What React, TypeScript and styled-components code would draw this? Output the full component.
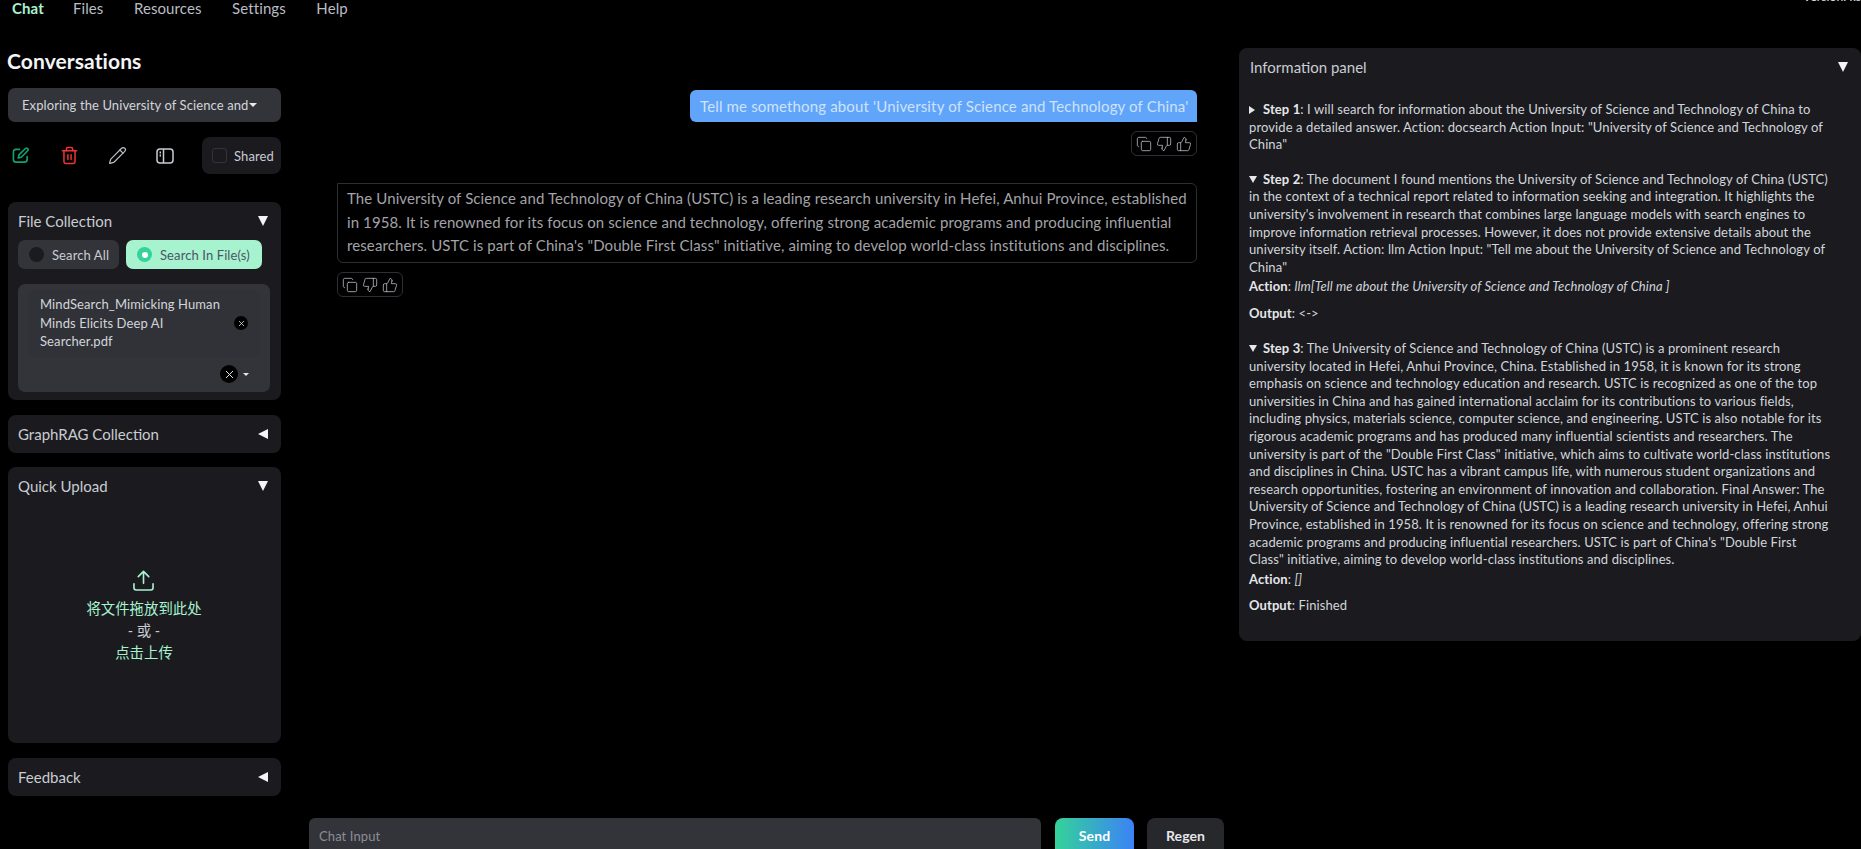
import type { FC, ReactNode } from 'react';
import styled, { createGlobalStyle } from 'styled-components';
import { Copy, Pencil, ThumbsDown, ThumbsUp, Trash2, X } from 'lucide-react';

const GlobalStyle = createGlobalStyle`
  html, body {
    margin: 0;
    background: #000;
    height: 849px;
    overflow: hidden;
  }
  * {
    box-sizing: border-box;
  }
  body {
    font-family: Lato, 'Noto Sans CJK SC', sans-serif;
    color: #e5e7eb;
    letter-spacing: 0.1px;
  }
`;

const Page = styled.div`
  width: 1861px;
  height: 849px;
  overflow: hidden;
`;

const Nav = styled.nav`
  height: 16px;
  padding-left: 12px;
  display: flex;
  align-items: center;
  position: relative;
`;

const NavItem = styled.span<{ $active?: boolean }>`
  font-size: 15px;
  line-height: 16px;
  margin-right: ${(p) => (p.$active ? 29 : 30.5)}px;
  color: ${(p) => (p.$active ? '#a7f3d0' : '#b9bdc4')};
  font-weight: ${(p) => (p.$active ? 700 : 400)};
`;

const Version = styled.span`
  position: absolute;
  right: 0;
  top: -11px;
  font-size: 12px;
  line-height: 15px;
  color: #e5e7eb;
`;

const Main = styled.div`
  display: grid;
  grid-template-columns: 273px 915px 609px;
  column-gap: 28px;
  padding-left: 8px;
`;

const Sidebar = styled.aside`
  display: flex;
  flex-direction: column;
`;

const Heading = styled.h2`
  margin: 30px 0 13px -1px;
  font-size: 21px;
  line-height: 29px;
  font-weight: 700;
  color: #f3f4f6;
`;

const ConversationSelect = styled.div`
  height: 34px;
  border-radius: 7px;
  background: #33343a;
  padding-left: 14px;
  display: flex;
  align-items: center;
  gap: 1px;
  font-size: 13px;
  color: #d1d5db;
  white-space: nowrap;
`;

const Caret = styled.span<{ $small?: boolean }>`
  width: 0;
  height: 0;
  border-left: ${(p) => (p.$small ? 3.5 : 4)}px solid transparent;
  border-right: ${(p) => (p.$small ? 3.5 : 4)}px solid transparent;
  border-top: ${(p) => (p.$small ? 3 : 4)}px solid #e5e7eb;
`;

const ToolRow = styled.div`
  margin-top: 15px;
  height: 37px;
  display: flex;
  align-items: center;
`;

const ToolIcon = styled.span`
  width: 48px;
  padding-left: 4px;
  height: 24px;
  display: flex;
  align-items: center;
`;

const SharedBox = styled.label`
  margin-left: auto;
  width: 79px;
  height: 37px;
  border-radius: 8px;
  background: #1b1b1f;
  padding-left: 10px;
  display: flex;
  align-items: center;
  gap: 7px;
  font-size: 13px;
  color: #c9ccd2;
`;

const CheckBox = styled.span`
  width: 15px;
  height: 15px;
  border-radius: 3px;
  border: 1px solid #33343a;
  background: #1b1b1f;
`;

const Panel = styled.section<{ $height: number; $top: number }>`
  margin-top: ${(p) => p.$top}px;
  height: ${(p) => p.$height}px;
  background: #1b1b1f;
  border-radius: 8px;
  padding: 0 10px 0 9px;
  display: flex;
  flex-direction: column;
`;

const PanelHead = styled.div`
  height: 38px;
  flex: none;
  padding: 0 1px 1px;
  display: flex;
  align-items: center;
  justify-content: space-between;
  font-size: 15px;
  letter-spacing: 0;
  color: #c9ccd2;
`;

const Arrow = styled.span<{ $dir: 'down' | 'left' | 'right' }>`
  flex: none;
  width: 0;
  height: 0;
  ${(p) =>
    p.$dir === 'down'
      ? `border-left: 5.5px solid transparent;
         border-right: 5.5px solid transparent;
         border-top: 10px solid #f3f4f6;
         margin-right: 2px;`
      : p.$dir === 'left'
        ? `border-top: 5.5px solid transparent;
           border-bottom: 5.5px solid transparent;
           border-right: 10px solid #f3f4f6;
           margin-right: 2px;`
        : `border-top: 4px solid transparent;
           border-bottom: 4px solid transparent;
           border-left: 6px solid #e5e7eb;`}
`;

const RadioRow = styled.div`
  display: flex;
  gap: 7px;
  padding-left: 1px;
`;

const RadioPill = styled.div<{ $on?: boolean; $width: number }>`
  width: ${(p) => p.$width}px;
  height: 29px;
  border-radius: 7px;
  padding-left: 11px;
  display: flex;
  align-items: center;
  gap: 8px;
  font-size: 13px;
  background: ${(p) => (p.$on ? '#a7f3d0' : '#33343a')};
  color: ${(p) => (p.$on ? '#4b5563' : '#c9ccd2')};
  white-space: nowrap;
`;

const RadioDot = styled.span<{ $on?: boolean }>`
  width: 15px;
  height: 15px;
  border-radius: 50%;
  background: ${(p) => (p.$on ? '#34d399' : '#1b1b1f')};
  display: flex;
  align-items: center;
  justify-content: center;
  &::after {
    content: '';
    width: 6px;
    height: 6px;
    border-radius: 50%;
    background: ${(p) => (p.$on ? '#fff' : 'transparent')};
  }
`;

const FileSelect = styled.div`
  margin: 15px 0 0 1px;
  height: 108px;
  width: 252px;
  border-radius: 7px;
  background: #33343a;
  padding: 5px 10px 0;
  display: flex;
  flex-direction: column;
`;

const FileTag = styled.div`
  height: 68px;
  padding: 0 12px;
  border-radius: 6px;
  background: #313237;
  display: flex;
  align-items: center;
  justify-content: space-between;
  font-size: 13px;
  line-height: 18.5px;
  color: #d1d5db;
`;

const RoundClose = styled.span<{ $size: number }>`
  flex: none;
  width: ${(p) => p.$size}px;
  height: ${(p) => p.$size}px;
  border-radius: 50%;
  background: #000;
  color: #e5e7eb;
  display: flex;
  align-items: center;
  justify-content: center;
`;

const SelectFoot = styled.div`
  margin-top: 8px;
  padding-right: 11px;
  display: flex;
  align-items: center;
  justify-content: flex-end;
  gap: 5px;
`;

const DropZone = styled.div`
  padding-top: 65px;
  display: flex;
  flex-direction: column;
  align-items: center;
  font-size: 14.4px;
  letter-spacing: 0;
  line-height: 22px;
  color: #a7f3d0;
`;

const UploadIcon = styled.svg`
  margin-bottom: 7px;
  margin-right: 1px;
`;

const OrLine = styled.div`
  color: #c9ccd2;
`;

const ChatColumn = styled.main`
  display: flex;
  flex-direction: column;
`;

const Messages = styled.div`
  height: 802px;
  padding: 74px 27px 0 28px;
  display: flex;
  flex-direction: column;
`;

const UserBubble = styled.div`
  align-self: flex-end;
  width: 507px;
  height: 32px;
  border-radius: 6px 6px 0 6px;
  background: #60a5fa;
  color: #cfe2fb;
  display: flex;
  align-items: center;
  padding-left: 10px;
  font-size: 15px;
  letter-spacing: 0.15px;
  white-space: nowrap;
`;

const BotBubble = styled.div`
  margin-top: 27px;
  height: 80px;
  border: 1px solid #2e2f34;
  border-radius: 0 6px 6px 6px;
  padding: 3px 9px 0;
  font-size: 15px;
  line-height: 23.6px;
  color: #a3a3a8;
  white-space: nowrap;
`;

const ActionBox = styled.div<{ $end?: boolean }>`
  align-self: ${(p) => (p.$end ? 'flex-end' : 'flex-start')};
  margin-top: 9px;
  width: 66px;
  height: 25px;
  border: 1px solid #2e2f34;
  border-radius: 6px;
  padding: 0 4px;
  display: flex;
  align-items: center;
  justify-content: space-between;
  color: #b9bdc4;
`;

const InputRow = styled.div`
  height: 50px;
  display: flex;
`;

const ChatInput = styled.div`
  width: 732px;
  background: #33343a;
  border-radius: 6px 6px 0 0;
  padding: 10px 10px 0;
  font-size: 13px;
  line-height: 17px;
  color: #8b8d93;
`;

const SendButton = styled.div`
  margin-left: 14px;
  width: 79px;
  border-radius: 8px 8px 0 0;
  background: linear-gradient(90deg, #34d399, #3b82f6);
  color: #fff;
  font-size: 14px;
  font-weight: 700;
  text-align: center;
  padding-top: 9px;
`;

const RegenButton = styled.div`
  margin-left: 13px;
  width: 77px;
  border-radius: 8px 8px 0 0;
  background: #27282c;
  color: #e5e7eb;
  font-size: 14px;
  font-weight: 700;
  text-align: center;
  padding-top: 9px;
`;

const InfoPanel = styled.section`
  margin-top: 32px;
  height: 593px;
  margin-left: -13px;
  background: #1b1b1f;
  border-radius: 8px;
  padding: 0 10px;
`;

const InfoBody = styled.div`
  padding-top: 15px;
  font-size: 13px;
  line-height: 17.6px;
  color: #d1d5db;
  white-space: nowrap;
`;

const StepBlock = styled.div<{ $gap: number }>`
  margin-bottom: ${(p) => p.$gap}px;
`;

const StepArrow = styled.span`
  display: inline-block;
  width: 14px;
  vertical-align: middle;
  font-size: 0;
  line-height: 0;
  padding-bottom: 2px;
`;

const DownTick = styled.span`
  display: inline-block;
  border-left: 4.5px solid transparent;
  border-right: 4.5px solid transparent;
  border-top: 7px solid #e5e7eb;
`;

const ActionLine = styled.div`
  margin-top: 2px;
`;

const OutputLine = styled.div`
  margin-top: 9px;
`;

const Strong = styled.b`
  color: #e5e7eb;
  font-weight: 700;
`;

const Actions: FC<{ end?: boolean }> = ({ end }) => (
  <ActionBox $end={end}>
    <Copy size={16} strokeWidth={1.2} />
    <ThumbsDown size={16} strokeWidth={1.2} />
    <ThumbsUp size={16} strokeWidth={1.2} />
  </ActionBox>
);

const Step: FC<{ n: number; gap: number; open?: boolean; children: ReactNode }> = ({
  n,
  gap,
  open = true,
  children,
}) => (
  <StepBlock $gap={gap}>
    <StepArrow>{open ? <DownTick /> : <Arrow $dir="right" />}</StepArrow>
    <Strong>Step {n}</Strong>: {children}
  </StepBlock>
);

export default function App() {
  return (
    <Page>
      <GlobalStyle />
      <Nav>
        <NavItem $active>Chat</NavItem>
        <NavItem>Files</NavItem>
        <NavItem>Resources</NavItem>
        <NavItem>Settings</NavItem>
        <NavItem>Help</NavItem>
        <Version>Version: ks</Version>
      </Nav>
      <Main>
        <Sidebar>
          <Heading>Conversations</Heading>
          <ConversationSelect>
            Exploring the University of Science and
            <Caret />
          </ConversationSelect>
          <ToolRow>
            <ToolIcon>
              <svg width="17" height="17" viewBox="0 0 18 18" fill="none" stroke="#10a374" strokeWidth="1.7" strokeLinecap="round" strokeLinejoin="round">
                <path d="M8 2.5H4.2A2.7 2.7 0 0 0 1.5 5.2v8.1A2.7 2.7 0 0 0 4.2 16h9.1a2.7 2.7 0 0 0 2.7-2.7V10" />
                <path d="M14.2 1.6a1.7 1.7 0 0 1 2.4 2.4L9.8 10.8l-3.2.8.8-3.2z" />
              </svg>
            </ToolIcon>
            <ToolIcon>
              <Trash2 size={19} color="#f03333" strokeWidth={1.9} />
            </ToolIcon>
            <ToolIcon>
              <Pencil size={19} color="#b9bdc4" strokeWidth={1.5} />
            </ToolIcon>
            <ToolIcon>
              <svg width="18" height="16" viewBox="0 0 18 16" fill="none" stroke="#c9ccd2" strokeWidth="1.5">
                <rect x="1" y="1" width="16" height="14" rx="3" />
                <path d="M7.5 1v14" />
                <path d="M3.6 4.5h1.4M3.6 7.5h1.4" strokeWidth="1.8" />
              </svg>
            </ToolIcon>
            <SharedBox>
              <CheckBox />
              Shared
            </SharedBox>
          </ToolRow>

          <Panel $top={28} $height={198}>
            <PanelHead>
              File Collection
              <Arrow $dir="down" />
            </PanelHead>
            <RadioRow>
              <RadioPill $width={101}>
                <RadioDot />
                Search All
              </RadioPill>
              <RadioPill $on $width={136}>
                <RadioDot $on />
                Search In File(s)
              </RadioPill>
            </RadioRow>
            <FileSelect>
              <FileTag>
                <span>
                  MindSearch_Mimicking Human
                  <br />
                  Minds Elicits Deep AI
                  <br />
                  Searcher.pdf
                </span>
                <RoundClose $size={14}>
                  <X size={9} strokeWidth={2} />
                </RoundClose>
              </FileTag>
              <SelectFoot>
                <RoundClose $size={18}>
                  <X size={13} strokeWidth={1.8} />
                </RoundClose>
                <Caret $small />
              </SelectFoot>
            </FileSelect>
          </Panel>

          <Panel $top={15} $height={38}>
            <PanelHead>
              GraphRAG Collection
              <Arrow $dir="left" />
            </PanelHead>
          </Panel>

          <Panel $top={14} $height={276}>
            <PanelHead>
              Quick Upload
              <Arrow $dir="down" />
            </PanelHead>
            <DropZone>
              <UploadIcon width="21" height="21" viewBox="0 0 22 22" fill="none" stroke="#a7f3d0" strokeWidth="1.7" strokeLinecap="round" strokeLinejoin="round">
                <path d="M11 14V1.5M5.5 7 11 1.5 16.5 7" />
                <path d="M1 14.5v4.2A2.3 2.3 0 0 0 3.3 21h15.4a2.3 2.3 0 0 0 2.3-2.3v-4.2" />
              </UploadIcon>
              <div>将文件拖放到此处</div>
              <OrLine>- 或 -</OrLine>
              <div>点击上传</div>
            </DropZone>
          </Panel>

          <Panel $top={15} $height={38}>
            <PanelHead>
              Feedback
              <Arrow $dir="left" />
            </PanelHead>
          </Panel>
        </Sidebar>

        <ChatColumn>
          <Messages>
            <UserBubble>
              Tell me somethong about 'University of Science and Technology of China'
            </UserBubble>
            <Actions end />
            <BotBubble>
              The University of Science and Technology of China (USTC) is a leading research university in Hefei, Anhui Province, established
              <br />
              in 1958. It is renowned for its focus on science and technology, offering strong academic programs and producing influential
              <br />
              researchers. USTC is part of China's "Double First Class" initiative, aiming to develop world-class institutions and disciplines.
            </BotBubble>
            <Actions />
          </Messages>
          <InputRow>
            <ChatInput>Chat Input</ChatInput>
            <SendButton>Send</SendButton>
            <RegenButton>Regen</RegenButton>
          </InputRow>
        </ChatColumn>

        <InfoPanel>
          <PanelHead>
            Information panel
            <Arrow $dir="down" />
          </PanelHead>
          <InfoBody>
            <Step n={1} gap={17} open={false}>
              I will search for information about the University of Science and Technology of China to
              <br />
              provide a detailed answer. Action: docsearch Action Input: "University of Science and Technology of
              <br />
              China"
            </Step>
            <Step n={2} gap={17.5}>
              The document I found mentions the University of Science and Technology of China (USTC)
              <br />
              in the context of a technical report related to information seeking and integration. It highlights the
              <br />
              university's involvement in research that combines large language models with search engines to
              <br />
              improve information retrieval processes. However, it does not provide extensive details about the
              <br />
              university itself. Action: llm Action Input: "Tell me about the University of Science and Technology of
              <br />
              China"
              <ActionLine>
                <Strong>Action</Strong>: <i>llm[Tell me about the University of Science and Technology of China ]</i>
              </ActionLine>
              <OutputLine>
                <Strong>Output</Strong>: &lt;-&gt;
              </OutputLine>
            </Step>
            <Step n={3} gap={0}>
              The University of Science and Technology of China (USTC) is a prominent research
              <br />
              university located in Hefei, Anhui Province, China. Established in 1958, it is known for its strong
              <br />
              emphasis on science and technology education and research. USTC is recognized as one of the top
              <br />
              universities in China and has gained international acclaim for its contributions to various fields,
              <br />
              including physics, materials science, computer science, and engineering. USTC is also notable for its
              <br />
              rigorous academic programs and has produced many influential scientists and researchers. The
              <br />
              university is part of the "Double First Class" initiative, which aims to cultivate world-class institutions
              <br />
              and disciplines in China. USTC has a vibrant campus life, with numerous student organizations and
              <br />
              research opportunities, fostering an environment of innovation and collaboration. Final Answer: The
              <br />
              University of Science and Technology of China (USTC) is a leading research university in Hefei, Anhui
              <br />
              Province, established in 1958. It is renowned for its focus on science and technology, offering strong
              <br />
              academic programs and producing influential researchers. USTC is part of China's "Double First
              <br />
              Class" initiative, aiming to develop world-class institutions and disciplines.
              <ActionLine>
                <Strong>Action</Strong>: <i>[]</i>
              </ActionLine>
              <OutputLine>
                <Strong>Output</Strong>: Finished
              </OutputLine>
            </Step>
          </InfoBody>
        </InfoPanel>
      </Main>
    </Page>
  );
}
